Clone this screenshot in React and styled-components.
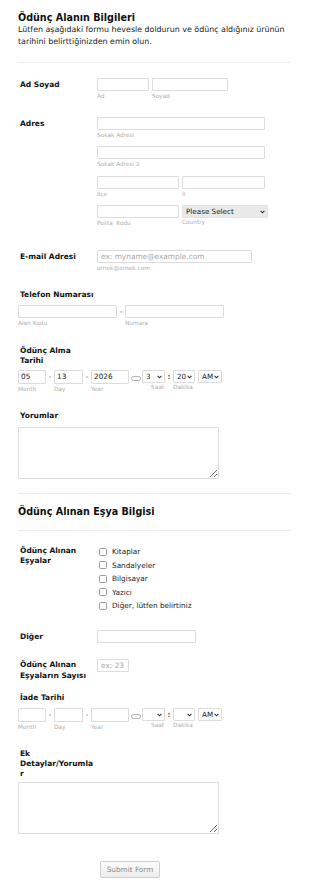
import styled, { createGlobalStyle } from "styled-components";

const GlobalStyle = createGlobalStyle`
  body {
    margin: 0;
    background: #fff;
    font-family: "DejaVu Sans", Verdana, sans-serif;
    color: #111;
  }
`;

const Chevron = () => (
  <svg width="5" height="4" viewBox="0 0 5 4">
    <path d="M0.6 0.8 L2.5 2.8 L4.4 0.8" fill="none" stroke="#333" strokeWidth="1.1" />
  </svg>
);

const CalendarPill = () => (
  <svg width="10" height="5" viewBox="0 0 10 5">
    <rect x="0.5" y="0.5" width="9" height="4" rx="2" fill="#fff" stroke="#999" strokeWidth="0.8" />
  </svg>
);

const Select = ({ w, value, grey }) => (
  <SelectBox $w={w}>
    <SelectControl $grey={grey} defaultValue={value}>
      <option value={value}>{value}</option>
    </SelectControl>
    <ChevronSpot>
      <Chevron />
    </ChevronSpot>
  </SelectBox>
);

const DateTime = ({ month, day, year, hour, minute }) => (
  <DateRow>
    <SubField>
      <DateInput $w={28} defaultValue={month} />
      <SubLabel>Month</SubLabel>
    </SubField>
    <Sep>-</Sep>
    <SubField>
      <DateInput $w={29} defaultValue={day} />
      <SubLabel>Day</SubLabel>
    </SubField>
    <Sep>-</Sep>
    <SubField>
      <DateInput $w={38} defaultValue={year} />
      <SubLabel>Year</SubLabel>
    </SubField>
    <PillSpot>
      <CalendarPill />
    </PillSpot>
    <SubField>
      <Select w={23} value={hour} />
      <SubLabel $up $indent={9}>Saat</SubLabel>
    </SubField>
    <Sep $colon>:</Sep>
    <SubField>
      <Select w={22} value={minute} />
      <SubLabel $up>Dakika</SubLabel>
    </SubField>
    <TimeGap />
    <SubField>
      <Select w={24} value="AM" />
    </SubField>
  </DateRow>
);

const items = ["Kitaplar", "Sandalyeler", "Bilgisayar", "Yazıcı", "Diğer, lütfen belirtiniz"];

const App = () => {
  return (
    <>
      <GlobalStyle />
      <Form>
        <Title>Ödünç Alanın Bilgileri</Title>
        <Intro>
          Lütfen aşağıdaki formu hevesle doldurun ve ödünç aldığınız ürünün tarihini
          belirttiğinizden emin olun.
        </Intro>
        <Divider $mt={14} />

        <Row $mt={15}>
          <Label>Ad Soyad</Label>
          <Fields>
            <SubField>
              <TextInput $w={52} />
              <SubLabel>Ad</SubLabel>
            </SubField>
            <SubField>
              <TextInput $w={76} />
              <SubLabel>Soyad</SubLabel>
            </SubField>
          </Fields>
        </Row>

        <Row $mt={17}>
          <Label>Adres</Label>
          <AddressGrid>
            <SubField $span>
              <TextInput $w={168} />
              <SubLabel>Sokak Adresi</SubLabel>
            </SubField>
            <SubField $span>
              <TextInput $w={168} />
              <SubLabel>Sokak Adresi 2</SubLabel>
            </SubField>
            <SubField>
              <TextInput $w={82} />
              <SubLabel>İlçe</SubLabel>
            </SubField>
            <SubField>
              <TextInput $w={83} />
              <SubLabel>İl</SubLabel>
            </SubField>
            <SubField>
              <TextInput $w={82} />
              <SubLabel>Posta&nbsp; Kodu</SubLabel>
            </SubField>
            <SubField>
              <Select w={86} value="Please Select" grey />
              <SubLabel $up>Country</SubLabel>
            </SubField>
          </AddressGrid>
        </Row>

        <Row $mt={23}>
          <Label>E-mail Adresi</Label>
          <SubField>
            <TextInput $w={155} placeholder="ex: myname@example.com" />
            <SubLabel>ornek@ornek.com</SubLabel>
          </SubField>
        </Row>

        <Block $mt={18}>
          <TopLabel $gap={5}>Telefon Numarası</TopLabel>
          <Fields $gap={0}>
            <SubField>
              <TextInput $w={99} />
              <SubLabel>Alan Kodu</SubLabel>
            </SubField>
            <Sep>-</Sep>
            <SubField>
              <TextInput $w={99} />
              <SubLabel>Numara</SubLabel>
            </SubField>
          </Fields>
        </Block>

        <Block $mt={19}>
          <TopLabel $w={60}>Ödünç Alma Tarihi</TopLabel>
          <DateTime month="05" day="13" year="2026" hour="3" minute="20" />
        </Block>

        <Block $mt={18}>
          <TopLabel $gap={6}>Yorumlar</TopLabel>
          <TextArea />
        </Block>

        <Divider $mt={14} />
        <SectionTitle>Ödünç Alınan Eşya Bilgisi</SectionTitle>
        <Divider $mt={12} />

        <Row $mt={14}>
          <Label $pt={1}>Ödünç Alınan Eşyalar</Label>
          <CheckList>
            {items.map((item) => (
              <CheckRow key={item}>
                <CheckBox />
                {item}
              </CheckRow>
            ))}
          </CheckList>
        </Row>

        <Row $mt={18}>
          <Label>Diğer</Label>
          <TextInput $w={99} />
        </Row>

        <Row $mt={16}>
          <Label $pt={1}>Ödünç Alınan Eşyaların Sayısı</Label>
          <TextInput $w={32} placeholder="ex: 23" />
        </Row>

        <Block $mt={12}>
          <TopLabel $gap={5}>İade Tarihi</TopLabel>
          <DateTime />
        </Block>

        <Block $mt={18}>
          <TopLabel $w={76} $gap={3}>Ek Detaylar/Yorumlar</TopLabel>
          <TextArea />
        </Block>

        <ButtonRow>
          <SubmitButton type="button">Submit Form</SubmitButton>
        </ButtonRow>
      </Form>
    </>
  );
};

const Form = styled.div`
  width: 273px;
  padding: 12px 0 20px 18px;
`;

const Title = styled.h1`
  margin: 0;
  font-size: 9.6px;
  line-height: 12px;
  font-weight: bold;
  color: #111;
`;

const SectionTitle = styled(Title)`
  margin-top: 12px;
`;

const Intro = styled.p`
  margin: 0;
  font-size: 7.9px;
  line-height: 12px;
  color: #222;
`;

const Divider = styled.div`
  margin-top: ${(p) => p.$mt}px;
  border-top: 1px solid #ececec;
`;

const Row = styled.div`
  display: flex;
  align-items: flex-start;
  margin-top: ${(p) => p.$mt}px;
`;

const Block = styled.div`
  margin-top: ${(p) => p.$mt}px;
`;

const Label = styled.div`
  width: 77px;
  flex: none;
  padding: ${(p) => p.$pt || 0}px 0 0 2px;
  font-size: 7.5px;
  line-height: ${(p) => (p.$pt ? "10.5px" : "13px")};
  font-weight: bold;
  color: #111;
`;

const TopLabel = styled.div`
  width: ${(p) => p.$w || 77}px;
  padding-left: 2px;
  margin-bottom: ${(p) => (p.$gap !== undefined ? p.$gap : 4)}px;
  font-size: 7.5px;
  line-height: 10px;
  font-weight: bold;
  color: #111;
  overflow-wrap: anywhere;
`;

const Fields = styled.div`
  display: flex;
  align-items: flex-start;
  gap: ${(p) => (p.$gap !== undefined ? p.$gap : 3)}px;
`;

const AddressGrid = styled.div`
  display: grid;
  grid-template-columns: 82px 86px;
  column-gap: 3px;
  row-gap: 7.3px;
`;

const SubField = styled.div`
  display: flex;
  flex-direction: column;
  ${(p) => p.$span && "grid-column: 1 / span 2;"}
`;

const SubLabel = styled.span`
  margin-top: ${(p) => (p.$up ? 0 : 1)}px;
  padding-left: ${(p) => p.$indent || 0}px;
  font-size: 5.8px;
  line-height: 8px;
  color: #b0b0b0;
  white-space: nowrap;
`;

const TextInput = styled.input`
  display: block;
  box-sizing: border-box;
  width: ${(p) => p.$w}px;
  height: 13px;
  margin: 0;
  padding: 0 3px;
  border: 1px solid #dcdcdc;
  border-radius: 1px;
  background: #fff;
  font-family: inherit;
  font-size: 7.4px;
  color: #333;
  outline: none;

  &::placeholder {
    color: #a8a8a8;
  }
`;

const DateInput = styled(TextInput)`
  height: 14px;
  padding: 0 2px;
  font-size: 7.3px;
  color: #222;
`;

const DateRow = styled.div`
  display: flex;
  align-items: flex-start;
`;

const Sep = styled.span`
  width: 8px;
  flex: none;
  text-align: center;
  font-size: 7.3px;
  line-height: 13px;
  color: #555;
  ${(p) => p.$colon && "font-weight: bold;"}
`;

const PillSpot = styled.span`
  width: 13px;
  display: flex;
  justify-content: center;
  padding-top: 6px;
`;

const TimeGap = styled.span`
  width: 3px;
`;

const SelectBox = styled.div`
  position: relative;
  width: ${(p) => p.$w}px;
  height: 13px;
`;

const SelectControl = styled.select`
  display: block;
  appearance: none;
  box-sizing: border-box;
  width: 100%;
  height: 13px;
  margin: 0;
  padding: 0 0 0 3px;
  border: 1px solid ${(p) => (p.$grey ? "#e4e4e4" : "#dcdcdc")};
  border-radius: 1px;
  background: ${(p) => (p.$grey ? "#e9e9e9" : "#fff")};
  font-family: inherit;
  font-size: 7.2px;
  line-height: 11px;
  color: #222;
  outline: none;
`;

const ChevronSpot = styled.span`
  position: absolute;
  right: 3px;
  top: 5px;
  display: flex;
  pointer-events: none;
`;

const TextArea = styled.textarea`
  display: block;
  box-sizing: border-box;
  width: 201px;
  height: 52px;
  margin: 0;
  border: 1px solid #dcdcdc;
  border-radius: 1px;
  font-family: inherit;
  outline: none;
  resize: both;
`;

const CheckList = styled.div`
  display: flex;
  flex-direction: column;
`;

const CheckRow = styled.label`
  display: flex;
  align-items: center;
  height: 13.5px;
  padding-left: 2px;
  font-size: 7.3px;
  color: #222;
`;

const CheckBox = styled.span`
  box-sizing: border-box;
  width: 8px;
  height: 8px;
  margin-right: 5px;
  border: 1px solid #9a9a9a;
  border-radius: 1.5px;
  background: #fff;
`;

const ButtonRow = styled.div`
  margin-top: 23px;
  padding-left: 82px;
`;

const SubmitButton = styled.button`
  box-sizing: border-box;
  width: 60px;
  height: 17px;
  padding: 0;
  border: 1px solid #cfcfcf;
  border-radius: 2px;
  background: linear-gradient(#fdfdfd, #ececec);
  font-family: inherit;
  font-size: 7.3px;
  color: #8a8a8a;
`;

export default App;
